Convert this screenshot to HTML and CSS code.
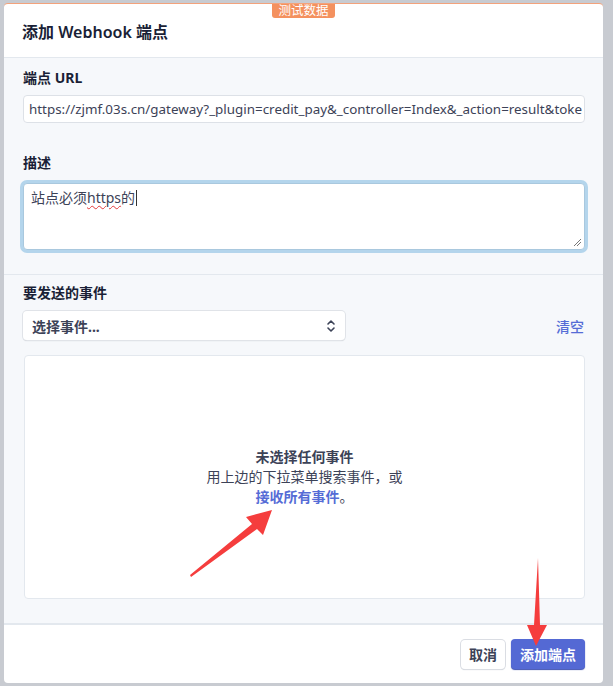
FILE: index.html
```html
<!DOCTYPE html>
<html>

<head>
    <meta charset="utf-8">
    <link rel="stylesheet" href="styles.css">
</head>

<body>
    <div class="page">
        <div class="modal">
            <span class="badge">测试数据</span>
            <div class="modal-head">
                <h2 class="modal-title">添加 Webhook 端点</h2>
            </div>

            <div class="modal-body">
                <div class="section">
                    <label class="label">端点 URL</label>
                    <div class="input">https://zjmf.03s.cn/gateway?_plugin=credit_pay&amp;_controller=Index&amp;_action=result&amp;toke</div>

                    <label class="label label-gap">描述</label>
                    <div class="textarea">
                        站点必须<span class="spell">https</span>的<span class="caret"></span>
                        <svg class="grip" width="9" height="9" viewBox="0 0 9 9">
                            <path d="M1 8 L8 1 M4 8 L8 4" stroke="#777" stroke-width="1" fill="none" />
                        </svg>
                    </div>
                </div>

                <div class="section section-events">
                    <label class="label">要发送的事件</label>
                    <div class="event-row">
                        <div class="select">
                            <span>选择事件...</span>
                            <svg width="10" height="14" viewBox="0 0 10 14">
                                <path d="M2 5 L5 2 L8 5 M2 9 L5 12 L8 9" stroke="#3c4257" stroke-width="1.6" fill="none" stroke-linecap="round" stroke-linejoin="round" />
                            </svg>
                        </div>
                        <a class="link clear">清空</a>
                    </div>
                    <div class="empty">
                        <strong>未选择任何事件</strong>
                        <span>用上边的下拉菜单搜索事件，或</span>
                        <span><a class="link">接收所有事件</a>。</span>
                    </div>
                </div>
            </div>

            <div class="modal-foot">
                <button class="btn">取消</button>
                <button class="btn btn-primary">添加端点</button>
            </div>
        </div>

        <!-- 标注箭头 -->
        <svg class="arrows" width="613" height="686" viewBox="0 0 613 686">
            <path d="M190 575 L252 524 L246 517 L272 510 L263 535 L257 529 L191 577 Z" fill="#f53d3d" />
            <path d="M538 558 L540 625 L547 625 L536 646 L527 625 L534 625 Z" fill="#f53d3d" />
        </svg>
    </div>
</body>

</html>
```

FILE: styles.css
```css
* {
    box-sizing: border-box;
}

body {
    margin: 0;
    font-family: "Noto Sans", "Noto Sans CJK SC", sans-serif;
    color: #3c4257;
}

.page {
    position: relative;
    width: 613px;
    height: 686px;
    background-color: #c8cbd1;
    padding: 3px 10px 0 4px;
    overflow: hidden;
}

.modal {
    position: relative;
    display: flex;
    flex-direction: column;
    width: 599px;
    height: 680px;
    background-color: #fff;
    border-top: 1px solid #f3a27b;
    border-radius: 4px;
    overflow: hidden;
}

.badge {
    position: absolute;
    top: -1px;
    left: 268px;
    width: 63px;
    height: 15px;
    line-height: 15px;
    text-align: center;
    font-size: 12.5px;
    color: #fff;
    background-color: #f4915f;
    border-radius: 0 0 3px 3px;
}

.modal-head {
    height: 54px;
    padding: 0 18px;
    display: flex;
    align-items: center;
    border-bottom: 1px solid #e3e8ee;
}

.modal-title {
    margin: 0;
    font-size: 16px;
    font-weight: 600;
    color: #1a1f36;
}

.modal-body {
    flex: 1;
    background-color: #f6f8fb;
    border-bottom: 2px solid #e3e8ee;
}

.section {
    display: flex;
    flex-direction: column;
    padding: 10px 18px 24px 19px;
}

.section-events {
    border-top: 1px solid #e3e8ee;
    padding-top: 8px;
    padding-bottom: 0;
}

.label {
    font-size: 14px;
    font-weight: 700;
    color: #1a1f36;
    line-height: 20px;
    margin-bottom: 7px;
}

.section-events .label {
    margin-bottom: 8px;
}

.label-gap {
    margin-top: 30px;
    margin-bottom: 10px;
}

.input {
    height: 28px;
    line-height: 26px;
    padding: 0 5px;
    font-size: 13.4px;
    white-space: nowrap;
    overflow: hidden;
    background-color: #fff;
    border: 1px solid #dde1e7;
    border-radius: 4px;
}

.textarea {
    position: relative;
    height: 67px;
    padding: 4px 7px;
    font-size: 14px;
    line-height: 20px;
    background-color: #fff;
    border: 1px solid #a9c8de;
    border-radius: 4px;
    box-shadow: 0 0 0 3px #b4d5ec;
}

.spell {
    text-decoration: underline wavy #e23b3b;
    text-decoration-thickness: 1px;
    text-underline-offset: 2px;
}

.caret {
    display: inline-block;
    width: 1px;
    height: 16px;
    margin-left: 1px;
    vertical-align: -3px;
    background-color: #333;
}

.grip {
    position: absolute;
    right: 2px;
    bottom: 2px;
}

.event-row {
    display: flex;
    justify-content: space-between;
    align-items: center;
}

.select {
    width: 322px;
    height: 29px;
    display: flex;
    align-items: center;
    justify-content: space-between;
    padding: 0 9px;
    font-size: 14px;
    font-weight: 700;
    color: #3c4257;
    background-color: #fff;
    border-radius: 4px;
    box-shadow: 0 0 0 1px #e0e3e8, 0 1px 1px #c4c8ce;
}

.link {
    color: #556cd6;
    font-weight: 700;
    text-decoration: none;
}

.clear {
    font-size: 14px;
    font-weight: 500;
    margin-right: 1px;
}

.empty {
    margin-top: 15px;
    margin-left: 1px;
    height: 244px;
    display: flex;
    flex-direction: column;
    align-items: center;
    justify-content: center;
    font-size: 14px;
    line-height: 20px;
    background-color: #fff;
    border: 1px solid #e3e8ee;
    border-radius: 4px;
}

.empty strong {
    font-weight: 700;
    color: #3c4257;
}

.modal-foot {
    height: 58px;
    display: flex;
    justify-content: flex-end;
    align-items: center;
    gap: 6px;
    padding: 0 18px 0 0;
}

.btn {
    height: 29px;
    padding: 0 8px;
    font-family: inherit;
    font-size: 14px;
    font-weight: 700;
    color: #3c4257;
    background-color: #fff;
    border: none;
    border-radius: 4px;
    box-shadow: 0 0 0 1px #dadde3, 0 1px 1px #c7cbd1;
}

.btn-primary {
    height: 30px;
    padding: 0 9px;
    color: #fff;
    background-color: #5469d4;
    box-shadow: 0 1px 1px #3d4fb0;
}

.arrows {
    position: absolute;
    top: 0;
    left: 0;
}
```
